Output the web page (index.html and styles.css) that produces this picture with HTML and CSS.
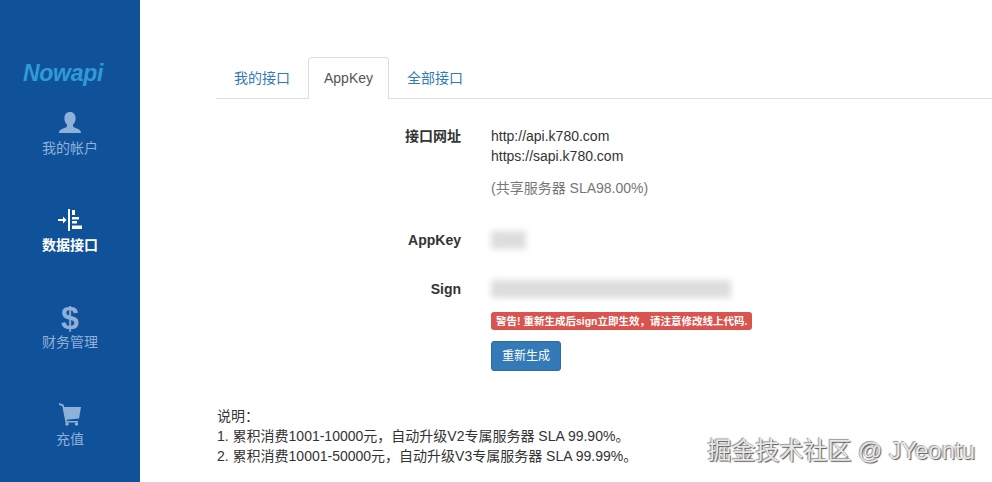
FILE: index.html
```html
<!DOCTYPE html>
<html lang="zh">
<head>
<meta charset="utf-8">
<title>Nowapi</title>
<link rel="stylesheet" href="styles.css">
</head>
<body>
<div class="app">
  <aside class="sidebar">
    <div class="logo">Nowapi</div>
    <nav class="nav">
      <a class="nav-item">
        <svg class="nav-icon" viewBox="0 0 24 24" width="24" height="24"><path fill="currentColor" d="M12 1c3.6 0 5.6 2.7 5.6 6.2 0 2.7-1.1 5-2.6 6.3v1.6c0 .9 1 1.4 3 2.1 2.5.9 5 1.7 5 4.8H1c0-3.100 2.500-3.900 5-4.800 2-.7 3-1.200 3-2.100v-1.600C7.500 12.200 6.400 9.900 6.400 7.200 6.400 3.700 8.400 1 12 1z"/></svg>
        <span>我的帐户</span>
      </a>
      <a class="nav-item active">
        <svg class="nav-icon" viewBox="0 0 24 24" width="24" height="24"><path fill="currentColor" d="M10 1h2v22h-2zM14 2h3v5h-3zM14 9h7v2.500h-7zM14 13h5v2.500h-5zM14 17.500h10V21H14zM0 11h5V8.500l3.500 3.500L5 15.500V13H0z"/></svg>
        <span>数据接口</span>
      </a>
      <a class="nav-item">
        <span class="dollar">$</span>
        <span>财务管理</span>
      </a>
      <a class="nav-item">
        <svg class="nav-icon" viewBox="0 0 24 24" width="24" height="24"><path fill="currentColor" d="M1 1l4.500 1.500L6.300 5H23l-2 11.500-12.500 1.200.4 1.300H20v1.500H7.500L4.300 4 1 3z"/><circle fill="currentColor" cx="9" cy="22" r="1.700"/><circle fill="currentColor" cx="18.500" cy="22" r="1.700"/></svg>
        <span>充值</span>
      </a>
    </nav>
  </aside>
  <main class="main">
    <ul class="tabs">
      <li class="tab">我的接口</li>
      <li class="tab tab-active">AppKey</li>
      <li class="tab">全部接口</li>
    </ul>
    <section class="form">
      <div class="row row-url">
        <div class="label">接口网址</div>
        <div class="value">
          <div>http://api.k780.com</div>
          <div>https://sapi.k780.com</div>
          <div class="muted">(共享服务器 SLA98.00%)</div>
        </div>
      </div>
      <div class="row row-key">
        <div class="label">AppKey</div>
        <div class="value"><div class="blur blur-key"></div></div>
      </div>
      <div class="row row-sign">
        <div class="label">Sign</div>
        <div class="value">
          <div class="blur blur-sign"></div>
          <div class="warn-line"><span class="warn">警告! 重新生成后sign立即生效，请注意修改线上代码.</span></div>
          <button class="btn">重新生成</button>
        </div>
      </div>
    </section>
    <section class="notes">
      <div>说明：</div>
      <div>1. 累积消费1001-10000元，自动升级V2专属服务器 SLA 99.90%。</div>
      <div>2. 累积消费10001-50000元，自动升级V3专属服务器 SLA 99.99%。</div>
    </section>
  </main>
  <div class="watermark">掘金技术社区 @ JYeontu</div>
</div>
</body>
</html>
```
FILE: styles.css
```css
* { box-sizing: border-box; }
html, body { margin: 0; height: 100%; overflow: hidden; background: #fff; }
body {
  font-family: "Liberation Sans", "Noto Sans CJK SC", sans-serif;
  font-size: 14px;
  line-height: 20px;
  color: #333;
}
.app { display: flex; width: 992px; height: 482px; position: relative; }
.sidebar { width: 140px; flex: none; background: #10529a; padding-top: 59px; overflow: hidden; }
.logo {
  font-family: "Liberation Sans", sans-serif;
  font-style: italic;
  font-weight: 700;
  font-size: 23px;
  line-height: 28px;
  color: #2f9ad8;
  padding-left: 23px;
  letter-spacing: -0.3px;
}
.nav { display: flex; flex-direction: column; margin-top: 24px; }
.nav-item {
  height: 97px;
  display: flex;
  flex-direction: column;
  align-items: center;
  color: #8fb0d8;
  font-size: 14px;
  line-height: 20px;
}
.nav-item.active { color: #fff; font-weight: 700; }
.nav-icon { display: block; margin-bottom: 3px; }
.dollar { font-size: 32px; font-weight: 700; line-height: 27px; font-family: "Liberation Sans", sans-serif; }
.main { flex: 1; padding: 57px 0 0 76px; }
.tabs {
  list-style: none;
  margin: 0;
  padding: 0;
  display: flex;
  height: 42px;
  border-bottom: 1px solid #ddd;
}
.tab {
  padding: 10px 17px;
  height: 42px;
  color: #337ab7;
  border: 1px solid transparent;
  border-bottom: 0;
  margin-right: 0;
}
.tab-active {
  color: #555;
  background: #fff;
  border-color: #ddd;
  border-radius: 4px 4px 0 0;
  height: 42px;
  padding-top: 10px;
  padding-left: 15px;
  padding-right: 15px;
}
.form { padding-top: 27px; }
.row { display: grid; grid-template-columns: 245px 1fr; column-gap: 30px; }
.label { text-align: right; font-weight: 700; }
.muted { color: #777; margin-top: 12px; }
.row-key { margin-top: 32px; }
.row-sign { margin-top: 29px; }
.blur { background: #ddd; filter: blur(3px); }
.blur-key { width: 35px; height: 18px; margin-top: 1px; }
.blur-sign { width: 240px; height: 18px; margin-top: 1px; }
.warn-line { margin-top: 13px; height: 18px; line-height: 18px; }
.warn {
  display: inline-block;
  background: #d9534f;
  color: #fff;
  font-size: 10.500px;
  font-weight: 700;
  line-height: 18px;
  height: 18px;
  padding: 0 5px;
  border-radius: 3px;
  white-space: nowrap;
}
.btn {
  display: block;
  margin-top: 12px;
  width: 70px;
  height: 30px;
  padding: 0;
  background: #337ab7;
  border: 1px solid #2e6da4;
  border-radius: 3px;
  color: #fff;
  font: 12px/18px "Liberation Sans", "Noto Sans CJK SC", sans-serif;
}
.notes { margin-top: 35px; padding-left: 1px; }
.watermark {
  position: absolute;
  right: 17px;
  bottom: 15px;
  font-size: 24px;
  line-height: 32px;
  color: #e8e8e8;
  text-shadow: 1px 1px 1px #555, -1px -1px 1px #999;
  white-space: nowrap;
}
```
